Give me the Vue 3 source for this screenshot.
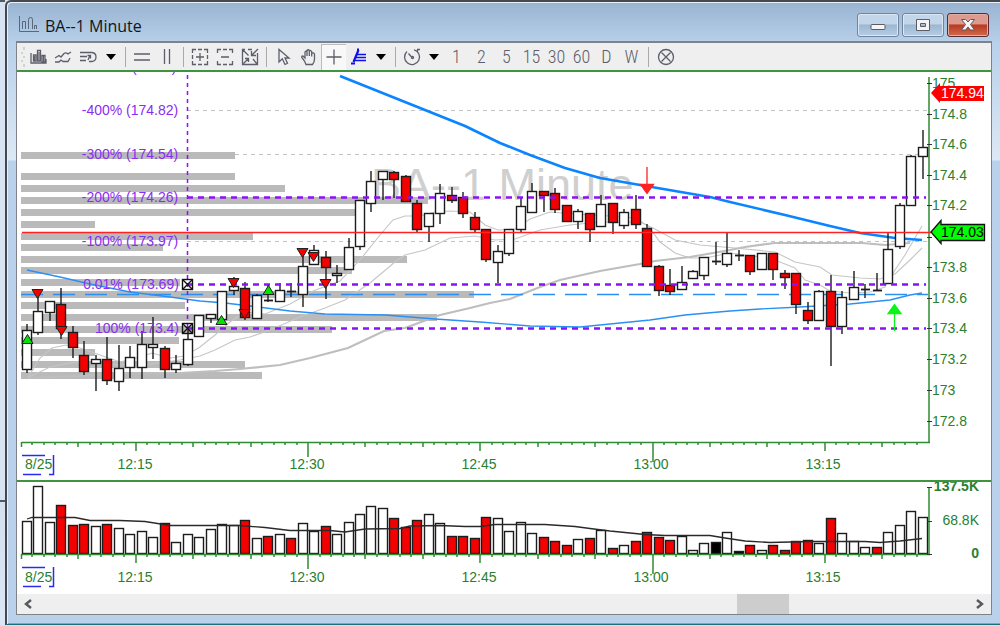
<script setup>
const SLOT = 11.483
const slotX = (i) => 27 + Math.round(i * SLOT)

// [high, open/close top, open/close bottom, low, kind]; w = up, r = down, d = doji
const candles = [
  [324, 330, 369, 372, 'w'], [290, 311, 332, 334, 'w'], [301, 301, 312, 320, 'w'], [288, 304, 328, 338, 'r'],
  [326, 332, 347, 357, 'r'], [341, 355, 371, 374, 'r'], [355, 359, 363, 390, 'w'], [337, 359, 380, 384, 'r'],
  [345, 368, 381, 390, 'w'], [346, 357, 367, 377, 'w'], [331, 344, 367, 378, 'w'], [317, 344, 347, 358, 'w'],
  [346, 348, 369, 377, 'r'], [355, 363, 369, 372, 'w'], [330, 339, 364, 365, 'w'], [315, 315, 336, 336, 'w'],
  [314, 314, 318, 322, 'w'], [291, 291, 319, 319, 'w'], [277, 286, 290, 294, 'w'], [282, 288, 317, 319, 'r'],
  [294, 295, 318, 318, 'w'], [284, 300, 300, 301, 'd'], [283, 290, 301, 301, 'w'], [283, 291, 291, 296, 'd'],
  [254, 266, 294, 306, 'w'], [245, 250, 264, 264, 'w'], [251, 257, 267, 298, 'r'], [265, 273, 275, 282, 'w'],
  [238, 247, 269, 269, 'w'], [200, 200, 246, 249, 'w'], [171, 181, 203, 211, 'w'], [171, 171, 179, 199, 'w'],
  [171, 172, 179, 197, 'r'], [175, 176, 201, 201, 'r'], [200, 203, 229, 231, 'r'], [213, 213, 226, 241, 'w'],
  [184, 193, 213, 223, 'w'], [187, 195, 200, 202, 'r'], [192, 197, 213, 217, 'r'], [212, 217, 229, 231, 'r'],
  [229, 229, 259, 261, 'r'], [245, 251, 262, 282, 'w'], [229, 229, 253, 255, 'w'], [198, 206, 229, 231, 'w'],
  [183, 191, 212, 212, 'w'], [191, 191, 195, 211, 'r'], [188, 193, 209, 212, 'r'], [205, 205, 221, 221, 'r'],
  [209, 211, 221, 228, 'w'], [213, 213, 229, 241, 'r'], [195, 204, 226, 226, 'w'], [203, 203, 222, 233, 'r'],
  [209, 212, 225, 228, 'w'], [195, 209, 224, 228, 'r'], [224, 228, 266, 266, 'r'], [265, 266, 290, 295, 'r'],
  [269, 285, 291, 294, 'r'], [266, 282, 289, 289, 'w'], [270, 271, 278, 278, 'w'], [257, 257, 275, 279, 'w'],
  [242, 261, 261, 264, 'd'], [232, 253, 264, 266, 'w'], [250, 255, 255, 260, 'd'], [255, 255, 271, 274, 'r'],
  [253, 253, 269, 269, 'w'], [253, 253, 269, 279, 'r'], [270, 273, 277, 288, 'r'], [273, 273, 304, 313, 'r'],
  [302, 310, 320, 323, 'r'], [290, 291, 320, 320, 'w'], [275, 291, 326, 365, 'r'], [291, 297, 326, 333, 'w'],
  [271, 287, 299, 299, 'w'], [284, 289, 289, 297, 'd'], [273, 290, 290, 290, 'd'], [232, 249, 283, 283, 'w'],
  [203, 205, 246, 248, 'w'], [155, 156, 205, 205, 'w'], [130, 147, 156, 178, 'w'],
]

// Height in pixels above the volume base line, with the bar's kind
const volumes = (
  '32w 67w 31w 48r 28r 29r 27w 29r 25w 19w 22w 16w 30r 11w 19w 16w 24w 29w 28w 33r 15w 17r 19w 15r 30w 22w 27r ' +
  '19w 31w 39w 47w 45w 35r 26r 33r 39w 30w 17r 17r 15r 36r 35w 22w 31w 20w 16r 12r 8r 14w 15r 23w 5r 8w 12r ' +
  '21r 16r 13r 17w 3w 10w 11k 21w 2k 8r 3w 8r 3r 12r 13r 10w 35r 20w 12w 6w 6r 21w 28w 42w 36w'
).split(' ').map((s) => ({ h: parseInt(s), kind: s.slice(-1) }))

// [top, right end] of each volume-at-price bar
const profile = [
  [152, 235], [173, 235], [185, 285], [197, 428], [209, 356], [221, 95], [233, 253], [244, 163],
  [256, 407], [267, 352], [279, 180], [291, 474], [302, 185], [314, 437], [326, 332], [337, 179],
  [349, 95], [361, 245], [372, 262],
]

const levels = [
  { text: '-500% (175.1)', x: 132, y: 72 },
  { text: '-400% (174.82)', x: 130, y: 115 },
  { text: '-300% (174.54)', x: 130, y: 159 },
  { text: '-200% (174.26)', x: 130, y: 202 },
  { text: '-100% (173.97)', x: 130, y: 246 },
  { text: '0.01% (173.69)', x: 131, y: 289 },
  { text: '100% (173.4)', x: 137, y: 333 },
]

const prices = [
  ['175', 83], ['174.8', 114], ['174.6', 144], ['174.4', 175], ['174.2', 205], ['', 237], ['173.8', 267],
  ['173.6', 298], ['173.4', 328], ['173.2', 359], ['173', 390], ['172.8', 421],
]

const times = [
  ['12:15', 135], ['12:30', 307], ['12:45', 479], ['13:00', 651], ['13:15', 823],
]

const tickLength = (i) => {
  if (i === 55) return 19
  if (i === 25) return 14
  if (i === 10 || i === 40 || i === 70) return 8
  return i % 5 === 0 ? 4 : 2
}
const ticks = Array.from({ length: 79 }, (_, i) => ({
  x: 21 + Math.round(i * SLOT) + (i === 0 ? 0.5 : 0),
  h: tickLength(i),
}))

const bodyClass = { w: 'up', r: 'down', k: 'flat' }
const sells = [[37, 289], [61, 326], [233, 278], [244, 309], [302, 248], [313, 252], [325, 279]]
const buys = [[27, 334], [221, 315], [268, 285]]
const periods = ['1', '2', '5', '15', '30', '60', 'D', 'W']
</script>

<template>
  <div class="desktop">
    <div class="behind"><div class="behind-top"></div></div>
    <main class="window">
      <header class="titlebar">
        <svg class="app-icon" width="22" height="18" viewBox="0 0 22 18">
          <path d="M1.500 0V15.500H21M4.500 13V5.500H7.500V13M10.500 13V3.500Q10.500 1.500 12.500 1.500Q14.500 1.500 14.500 3.500V13M16.500 13V9.500H18.500V13" />
        </svg>
        <h1>BA--1 Minute</h1>
        <div class="caption">
          <button aria-label="Minimize">
            <svg width="18" height="16" viewBox="0 0 18 16"><rect x="2" y="7.500" width="14" height="5" rx="1" /></svg>
          </button>
          <button aria-label="Maximize">
            <svg width="18" height="16" viewBox="0 0 18 16"><path fill-rule="evenodd" d="M2.500 2.500H15.500V13.500H2.500ZM6.500 6.500V9.500H11.500V6.500Z" /></svg>
          </button>
          <button class="close" aria-label="Close">
            <svg width="18" height="16" viewBox="0 0 18 16"><path d="M2.500 2.500H6.500L9 5L11.500 2.500H15.500L11.500 7.500L15.500 13H11.500L9 10L6.500 13H2.500L6.500 7.500Z" /></svg>
          </button>
        </div>
      </header>

      <section class="client">
        <nav class="toolbar" aria-label="Chart tools">
          <svg class="grip" width="4" height="22" viewBox="0 0 4 22"><path d="M3 1v3M1 6v2M3 10v2M1 14v2M3 18v3" /></svg>
          <button aria-label="Bar style">
            <svg viewBox="0 0 20 20"><path d="M3 6V16H18V12M5.500 8V14H8V8ZM9.500 14V3.500H12.500V14ZM14 8.500H17V15H14Z" /><path d="M11 5V14M15.500 9V15M6.700 9V14" /></svg>
          </button>
          <button aria-label="Indicators">
            <svg viewBox="0 0 20 20"><path d="M2 11L6 8.500L8 10L11 6.500Q13 5 15 7L18 5M2 15H6L8 13L10 14.500H15L17 11" /></svg>
          </button>
          <button aria-label="Reload data">
            <svg viewBox="0 0 20 20"><path d="M2 5.500H14Q18 6 18 10Q18 14 14 14.500H11M2 9.500H9M2 13.500H8M10 13L12 8.500M9.500 8.500H12.500V11.500" /></svg>
          </button>
          <button class="caret" aria-label="More data options"></button>
          <i class="sep"></i>
          <button aria-label="Horizontal lines"><svg viewBox="0 0 20 20"><path d="M2 7H18M2 13H18" /></svg></button>
          <button aria-label="Vertical lines"><svg viewBox="0 0 20 20"><path d="M7.500 2V17M12.500 2V17" /></svg></button>
          <i class="sep"></i>
          <button aria-label="Zoom in">
            <svg viewBox="0 0 20 20"><path d="M2.500 6V2.500H6M8 2.500H12M14 2.500H17.500V6M17.500 8V12M17.500 14V17.500H14M12 17.500H8M6 17.500H2.500V14M2.500 12V8M6 10H14M10 6V14" /></svg>
          </button>
          <button aria-label="Zoom out">
            <svg viewBox="0 0 20 20"><path d="M2.500 6V2.500H6M8 2.500H12M14 2.500H17.500V6M17.500 14V17.500H14M12 17.500H8M6 17.500H2.500V14M6 10H14" /></svg>
          </button>
          <button aria-label="Fit chart">
            <svg viewBox="0 0 20 20"><path d="M5 2.500H2.500V17.500H17.500V6M8 2.500H12M18 2L11.500 8.500M11.500 4V8.500H16M3 3L8.500 8.500M3.500 16.500L8.500 11.500M5 11.500H8.500V15M13 12L17 17" /></svg>
          </button>
          <i class="sep wide"></i>
          <button aria-label="Pointer">
            <svg viewBox="0 0 20 20"><path d="M5 2.500V15L8.300 11.800L11 17.500L13.500 16.300L11 11H15Z" /></svg>
          </button>
          <button aria-label="Pan">
            <svg viewBox="0 0 20 20"><path d="M7 17.500L5.500 14L2.800 10.500Q2.500 8.800 4 9L6 11V5Q7 3.500 8 5V9V3.500Q9.200 2 10.300 3.500V9V4Q11.700 2.800 12.700 4.500V9.500V6.500Q14.500 5 15.500 7V12Q15.500 15 13.500 17.500Z" /></svg>
          </button>
          <button class="pressed" aria-label="Crosshair" aria-pressed="true">
            <svg viewBox="0 0 20 20"><path d="M10 2.500V17.500M2.500 10H17.500" /></svg>
          </button>
          <button class="draw" aria-label="Retracement tool">
            <svg viewBox="0 0 20 20"><path class="bold" d="M2 16.500H6M4.500 15L9.500 3M8 2.500H10" /><path d="M8 7.500H17M7 10.500H17M6 13.500H17" /></svg>
          </button>
          <button class="caret narrow" aria-label="More drawing tools"></button>
          <i class="sep"></i>
          <button aria-label="Time period">
            <svg viewBox="0 0 20 20"><path d="M12 2.800A7.500 7.500 0 1 1 5 4.500M15 2.500H18M15.500 2.500V6M6.500 6.500L10 10.500" /><circle cx="10.500" cy="10.500" r="1" /></svg>
          </button>
          <button class="caret narrow" aria-label="More periods"></button>
          <button v-for="p in periods" :key="p" class="period">{{ p }}</button>
          <i class="sep wide"></i>
          <button aria-label="Clear">
            <svg viewBox="0 0 20 20"><circle cx="10" cy="10" r="7.500" /><path d="M5.500 5.500L14.500 14.500M14.500 5.500L5.500 14.500" /></svg>
          </button>
        </nav>

        <svg class="chart" viewBox="17 72 974 408" role="img" aria-label="BA price chart, 1 minute">
          <text class="watermark" x="371" y="200">BA--1 Minute</text>
          <rect v-for="b in profile" :key="b[0]" class="profile" x="21" :y="b[0]" :width="b[1] - 21" height="7" />
          <g class="axis">
            <path d="M929 77V442.500M21.500 442.500H930" />
            <path v-for="t in ticks" :key="t.x" :d="`M${t.x} 442v${t.h + 1}`" />
          </g>
          <path v-for="p in prices" :key="p[1]" class="price-tick" :d="`M927 ${p[1] + 0.5}h5`" />
          <text v-for="p in prices" :key="p[1]" class="label" x="932" :y="p[1] + 5">{{ p[0] }}</text>
          <text v-for="t in times" :key="t[0]" class="label mid" :x="t[1]" y="469">{{ t[0] }}</text>
          <text class="label" x="25" y="469">8/25</text>
          <path class="date-box" d="M22 455.500H45M53.500 455V474.500H49M41 474.500H23" />

          <path class="minor" d="M187 110.500H928M235 154.500H928M187 241.500H928" />
          <path class="gray-thin" d="M27 379L40 358L52 348L66 345L80 348L100 355L120 362L140 357L152 353L170 358L185 356L200 347L215 335L230 322L245 312L265 314L290 304L313 291L340 281L360 260L380 235L393 220L405 216L420 216L435 212L450 211L470 212L485 225L498 230L515 229L530 219L550 212L575 214L610 216L635 218L648 226L660 242L675 253L690 258L705 258L730 253L760 257L780 262L795 268L805 280L820 285L830 291L850 293L870 292L885 287L895 270L905 255L922 226" />
          <path class="gray-thin" d="M27 378L50 367L75 362L110 365L150 364L180 360L200 356L215 350L235 340L250 337L270 330L300 317L325 308L345 300L370 283L395 262L405 255L425 250L450 238L475 236L495 240L515 239L540 230L570 225L600 222L640 222L655 229L675 240L700 245L735 248L775 252L795 262L820 267L832 275L860 278L880 279L895 274L910 260L922 248" />
          <path class="gray-thick" d="M27 378L80 376L110 374L180 373L215 371L240 369L280 365L310 358L348 348L384 331L405 328L440 315L470 308L490 303L510 299L540 287L560 280L600 271L640 264L655 261L690 257L730 250L745 247L775 243L862 243L885 245L910 243" />
          <path class="blue-thin" d="M27 270L60 277L90 284L130 292L170 297L200 301L225 303L250 306L290 311L325 314L385 315L410 317L435 319L480 322L530 326L580 327L620 323L650 320L685 315L730 311L760 309L800 307L850 304L890 300L910 295L922 293" />
          <path class="blue-dash" d="M21 294.500H928" />
          <path class="blue-thick" d="M340 76L400 100L430 112L465 126L500 143L530 155L565 168L600 178L640 185L675 191L710 197L730 202L785 215L830 226L860 233L895 238L922 240" />

          <g v-for="(c, i) in candles" :key="i" class="candle">
            <path :d="`M${slotX(i)} ${c[0]}V${c[3] + 1}`" />
            <path v-if="c[4] === 'd'" class="doji" :d="`M${slotX(i) - 4} ${c[1] + 0.5}h9`" />
            <rect v-else :class="bodyClass[c[4]]" :x="slotX(i) - 4.5" :y="c[1] + 0.5" width="9" :height="c[2] - c[1]" />
          </g>

          <path class="last-line" d="M22 232.500H931" />
          <path class="level" d="M187 197.500H926M187 284.500H926M187 328.500H926" />
          <path class="anchor" d="M187.500 75V328" />
          <text v-for="l in levels" :key="l.text" class="level-text" :x="l.x" :y="l.y">{{ l.text }}</text>
          <g v-for="y in [279, 323]" :key="y" class="handle">
            <rect x="182.500" :y="y + 0.5" width="10" height="10" />
            <path :d="`M183 ${y + 1}l9 9m0 -9l-9 9`" />
          </g>
          <path v-for="s in sells" :key="s[0]" class="sell" :d="`M${s[0] - 5} ${s[1] + 0.5}h11l-5.500 9z`" />
          <path v-for="b in buys" :key="b[0]" class="buy" :d="`M${b[0] - 5} ${b[1] + 9.5}h11l-5.500 -9z`" />
          <path class="sell-arrow" d="M647 167V186M640.500 184.500H653.500L647 193.500Z" />
          <path class="buy-arrow" d="M894.500 331V312M888 313.500H901L894.500 304.500Z" />

          <path class="tag-red" d="M931 93L940 83V86H984V101H940V103Z" />
          <text class="tag-text light" x="941" y="98">174.94</text>
          <path class="tag-green" d="M931 232L941 220.500V224.500H984.500V240.500H941V243.500Z" />
          <text class="tag-text" x="941" y="237">174.03</text>
        </svg>

        <svg class="chart volume" viewBox="17 482 974 112" role="img" aria-label="Volume">
          <rect v-for="(v, i) in volumes" :key="i" class="vol" :class="bodyClass[v.kind]" :x="slotX(i) - 4.5" :y="553.5 - v.h" width="9" :height="v.h" />
          <path class="vol-avg" d="M27 519L32 517.500H75L90 520.500H120L145 521.500L170 525.500H240L265 527.500L290 530.500H330L345 532L365 529L400 528.500L410 526L440 525.500L465 526.500H480L495 524.500H545L575 526.500L590 528.500L610 531L630 533L645 534.500L665 535.500H710L725 538L745 541L770 542.500L810 541.500H865L880 542.500L900 541L922 538.500" />
          <g class="axis">
            <path d="M929 487V554.500M21.500 554.500H930" />
            <path v-for="t in ticks" :key="t.x" :d="`M${t.x} 554v${t.h + 1}`" />
          </g>
          <path class="price-tick" d="M927 487.500h5M927 521.500h5M927 554.500h5" />
          <text class="label end strong" x="979" y="491">137.5K</text>
          <text class="label end" x="979" y="525">68.8K</text>
          <text class="label end strong" x="979" y="558">0</text>
          <text v-for="t in times" :key="t[0]" class="label mid" :x="t[1]" y="582">{{ t[0] }}</text>
          <text class="label" x="25" y="582">8/25</text>
          <path class="date-box" d="M22 567.500H45M53.500 567V586.500H49M41 586.500H23" />
        </svg>

        <div class="scrollbar">
          <button aria-label="Scroll left"><svg width="12" height="12" viewBox="0 0 12 12"><path d="M9 2L4 6L9 10" /></svg></button>
          <div class="track"><div class="thumb"></div></div>
          <button aria-label="Scroll right"><svg width="12" height="12" viewBox="0 0 12 12"><path d="M3 2L8 6L3 10" /></svg></button>
        </div>
      </section>
    </main>
  </div>
</template>

<style>
body { margin: 0; background: #d7e3f3; }
</style>

<style scoped>
.desktop { display: flex; font-family: "Liberation Sans", Arial, sans-serif; }
.behind { width: 5px; background: linear-gradient(#b4c5d4, #dbe7f5); }
.behind-top { height: 502px; background: #d7e3f3; border-top: 2px solid #54585e; border-bottom: 2px solid #54585e; box-sizing: border-box; }
.window {
  flex: 1; min-width: 0; box-sizing: border-box;
  border-left: 2px solid #45494f; border-top: 2px solid #45494f; border-bottom: 1px solid #17717f;
  border-top-left-radius: 6px;
  padding: 0 8px 9px 9px;
  box-shadow: inset 1px 1px #e6f0fa, inset 0 -1px #35c6e0;
  background: linear-gradient(#98b3d1, #b9d1ea 42px, #dce8f5 158px, #b9d1ea 159px);
}
.titlebar { display: flex; align-items: flex-start; height: 39px; }
.app-icon { margin: 14px 0 0 2px; fill: none; stroke: #59677c; stroke-width: 1; }
h1 { margin: 13px 0 0 5px; font: 400 16px/22px "Open Sans", "Noto Sans", sans-serif; color: #10151e; }
.caption { display: flex; gap: 3px; margin: 11px 3px 0 auto; }
.caption button {
  width: 42px; height: 24px; padding: 0; display: grid; place-items: center;
  border: 1px solid #71849e; border-radius: 3px; box-shadow: inset 0 0 0 1px #dbe7f4;
  background: linear-gradient(#c3d5e8 0 45%, #9db7d2 50%, #b6cde4);
}
.caption svg { fill: #f5f5f5; stroke: #585d68; stroke-width: 1; }
.caption .close { border-color: #5d2830; box-shadow: inset 0 0 0 1px #e3aca3; background: linear-gradient(#dc9b8e 0 45%, #b93a22 50%, #cf6a4c); }
.client { border: 1px solid #7f8388; border-top-width: 2px; background: #fff; }
.toolbar { display: flex; align-items: center; height: 27px; background: #efefef; border-bottom: 2px solid #3f953f; }
.toolbar button { width: 25px; height: 27px; padding: 0; border: 0; background: none; display: grid; place-items: center; color: #5c5e6b; }
.toolbar button svg { width: 20px; height: 20px; fill: none; stroke: currentColor; stroke-width: 1.3; }
.toolbar .bold { stroke-width: 2.2; }
.toolbar .grip { margin: 0 0 0 4px; fill: none; stroke: #b5b5b5; }
.toolbar .pressed { height: 26px; background: #f8f8f8; box-shadow: inset 1px 1px #bcbcbc; }
.toolbar .draw { color: #1010ee; }
.toolbar .caret { width: 21px; }
.toolbar .caret.narrow { width: 20px; }
.toolbar .caret::before { content: ""; border: 5px solid transparent; border-top: 6px solid #000; border-bottom: 0; }
.toolbar .period { font: 300 18px/27px "Roboto Condensed", Roboto, "Liberation Sans", sans-serif; }
.sep { width: 8px; height: 20px; background: linear-gradient(#aaa, #aaa) center / 1px 100% no-repeat; }
.sep.wide { width: 9px; }
.chart { display: block; width: 100%; height: auto; }
.volume { border-top: 2px solid #3f953f; }
.chart path { fill: none; }
.watermark { font-size: 45px; fill: #cfcfcf; }
.chart .profile { fill: #bababa; }
.axis { stroke: #2f8b34; stroke-width: 1.5; }
.price-tick { stroke: #333; }
.label { font-size: 14px; fill: #2a7f32; }
.mid { text-anchor: middle; }
.end { text-anchor: end; }
.strong { font-weight: 700; }
.date-box { stroke: #2a2af0; stroke-width: 1.5; }
.minor { stroke: #c4c4c4; stroke-width: 1.2; stroke-dasharray: 4 4; }
.gray-thin { stroke: #c6c6c6; stroke-width: 1.1; }
.gray-thick { stroke: #bebebe; stroke-width: 2.2; }
.blue-thin { stroke: #2a90f4; stroke-width: 1.3; }
.blue-dash { stroke: #2a90f4; stroke-width: 1.4; stroke-dasharray: 22 10; }
.blue-thick { stroke: #0a84ff; stroke-width: 2.6; stroke-linejoin: round; }
.candle, .vol { stroke: #1c1c1c; stroke-width: 1.4; }
.doji { stroke-width: 1.8; }
.up { fill: #fff; }
.down { fill: #f50000; }
.flat { fill: #000; }
.last-line { stroke: #f22; stroke-width: 1.5; }
.level { stroke: #8b12f5; stroke-width: 2.5; stroke-dasharray: 6 5; }
.anchor { stroke: #8b12f5; stroke-width: 1.5; stroke-dasharray: 4 4; }
.level-text { font-size: 14px; fill: #8b2cf5; text-anchor: middle; }
.handle { stroke: #111; stroke-width: 1.4; fill: none; }
.chart .sell { fill: #f50000; stroke: #222; }
.chart .buy { fill: #00e400; stroke: #222; }
.chart .sell-arrow { fill: #f22; stroke: #f22; stroke-width: 1.3; }
.chart .buy-arrow { fill: #0df31a; stroke: #0df31a; stroke-width: 1.3; }
.chart .tag-red { fill: #f00; }
.chart .tag-green { fill: #0f0; stroke: #111; stroke-width: 1.3; }
.tag-text { font-size: 14px; fill: #000; }
.tag-text.light { fill: #fff; }
.vol-avg { stroke: #2a2a2a; stroke-width: 1.3; }
.scrollbar { display: flex; height: 20px; background: #efefef; }
.scrollbar button { width: 22px; padding: 0; border: 0; background: none; display: grid; place-items: center; }
.scrollbar svg { fill: none; stroke: #55585c; stroke-width: 2.4; }
.track { flex: 1; }
.thumb { height: 100%; width: 5.6%; margin-left: 75%; background: #cdcdcd; }
</style>
